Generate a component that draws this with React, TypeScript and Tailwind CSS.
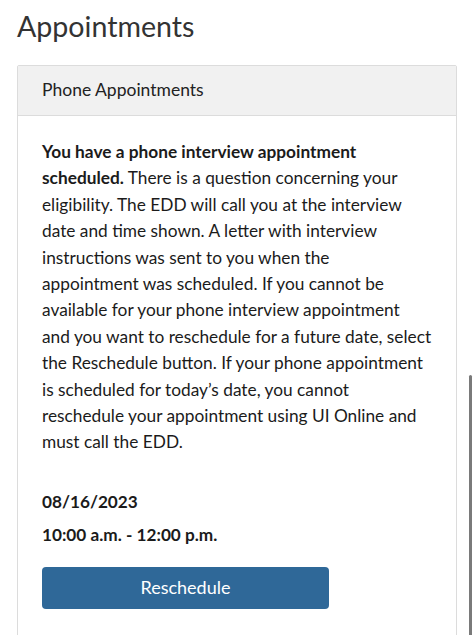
export default function App() {
  return (
    <div className="relative min-h-[635px] bg-white font-['Lato','Open_Sans',sans-serif] text-[#1b1b1b] overflow-hidden">
      {/* Page heading */}
      <h1 className="pl-[17px] pt-[6px] text-[28.6px] leading-[40px] text-[#333]">Appointments</h1>

      {/* Card */}
      <div className="mx-[17px] mt-[19px] border border-[#dcdcdc] rounded-[2px]">
        <div className="h-[50px] flex items-center px-6 bg-[#f1f1f1] border-b border-[#dcdcdc]">
          <p className="text-[17.5px] text-[#222]">Phone Appointments</p>
        </div>

        <div className="px-6 pt-[23px] pb-8">
          <p className="text-[17.3px] leading-[26.4px]">
            <span className="font-bold">You have a phone interview appointment<br />scheduled.</span> There is a
            question concerning your<br />
            eligibility. The EDD will call you at the interview<br />
            date and time shown. A letter with interview<br />
            instructions was sent to you when the<br />
            appointment was scheduled. If you cannot be<br />
            available for your phone interview appointment<br />
            and you want to reschedule for a future date, select<br />
            the Reschedule button. If your phone appointment<br />
            is scheduled for today’s date, you cannot<br />
            reschedule your appointment using UI Online and<br />
            must call the EDD.
          </p>

          <div className="mt-[33px] flex flex-col gap-[7px] font-bold text-[17.2px] leading-[26px]">
            <p>08/16/2023</p>
            <p>10:00 a.m. - 12:00 p.m.</p>
          </div>

          <button className="mt-[19px] w-[287px] h-[42px] rounded-[4px] bg-[#2f6898] text-white text-[18px]">
            Reschedule
          </button>
        </div>
      </div>

      {/* Scroll indicator */}
      <div className="absolute left-[469px] top-[375px] w-[3px] h-[280px] rounded-full bg-[#7a7a7a]" />
    </div>
  )
}
